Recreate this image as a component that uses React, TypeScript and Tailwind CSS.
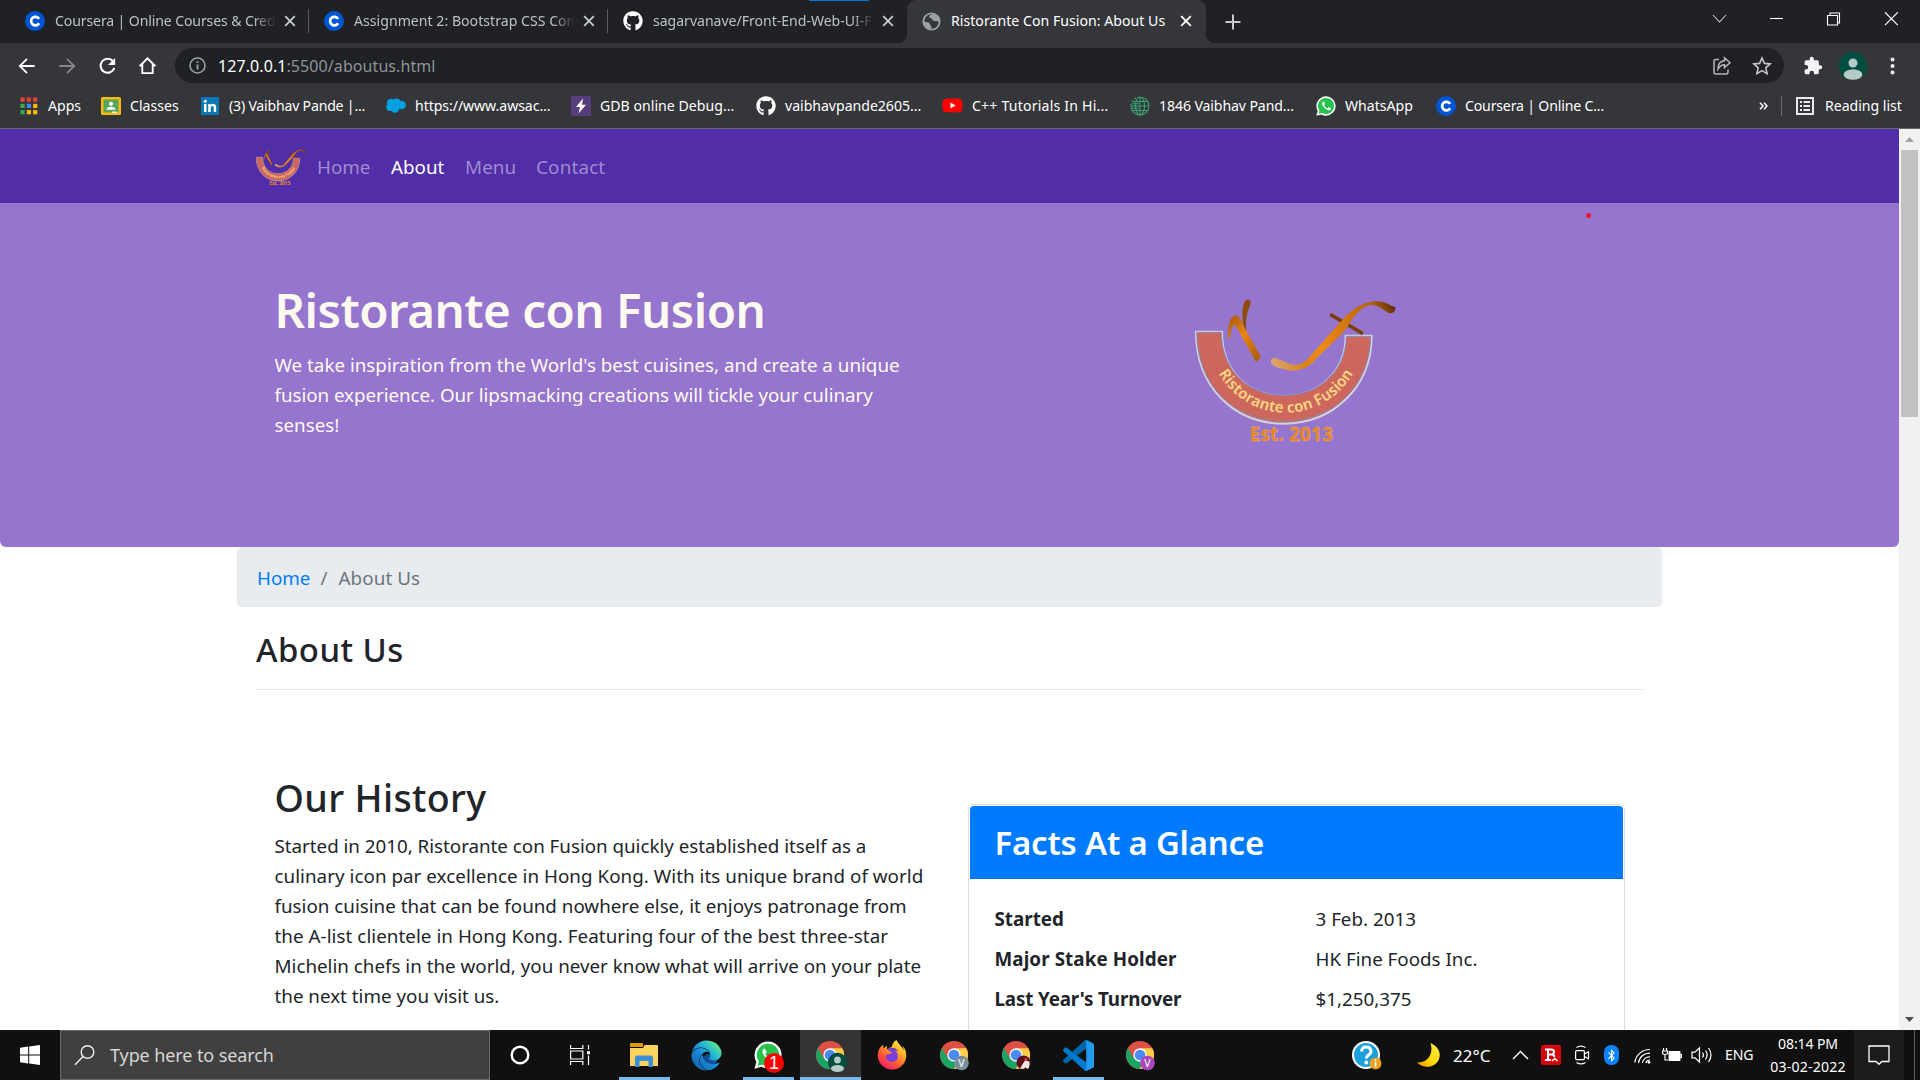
import type { ReactNode } from 'react';
import { FaGithub, FaYoutube, FaEdge, FaFirefoxBrowser, FaBluetoothB } from 'react-icons/fa';

const CourseraIcon = ({ size = 20 }: { size?: number }) => (
  <svg width={size} height={size} viewBox="0 0 20 20">
    <circle cx="10" cy="10" r="10" fill="#0056d2" />
    <path d="M14.1 7.9A4.3 4.3 0 1 0 14.1 12.3" fill="none" stroke="#fff" strokeWidth="2.7" />
  </svg>
);

const GlobeIcon = () => (
  <svg width="19" height="19" viewBox="0 0 20 20">
    <circle cx="10" cy="10" r="9.5" fill="#9aa0a6" />
    <path d="M11 2.200c-1 1.200-3.600 1-3.600 2.800 0 1.600 3.200 1.200 3.400 3 .1 1 1.600 1.600 3 1.400 1.700-.2 3.700.4 3.700 1.100-.2 3.900-3.400 7.200-7.600 7.300v-3c-1.700-.4-1.100-3-3.200-3.700-1.500-.5-3.300-.6-4.200-1.300C2.700 5.600 6.200 2 11 2.200z" fill="#35363a" />
  </svg>
);

const CloseIcon = ({ bright }: { bright?: boolean }) => (
  <svg width="12" height="12" viewBox="0 0 12 12">
    <path d="M1.200 1.200l9.600 9.600M10.800 1.200l-9.600 9.600" stroke={bright ? '#ffffff' : '#c4c7cb'} strokeWidth="1.900" />
  </svg>
);

const AppsIcon = () => (
  <svg width="18" height="18" viewBox="0 0 18 18">
    {['#ea4335', '#ea4335', '#ea4335', '#34a853', '#4285f4', '#fbbc04', '#34a853', '#fbbc04', '#fbbc04'].map((c, i) => (
      <rect key={i} x={(i % 3) * 6.3 + 0.5} y={Math.floor(i / 3) * 6.3 + 0.5} width="4.200" height="4.200" fill={c} />
    ))}
  </svg>
);

const ClassesIcon = () => (
  <svg width="20" height="18" viewBox="0 0 20 18">
    <rect width="20" height="18" rx="1.500" fill="#f9bb0d" />
    <rect x="2.500" y="2.500" width="15" height="13" fill="#57a55a" />
    <circle cx="10" cy="6.800" r="2.100" fill="#fff" />
    <path d="M5.500 12.800q0-3 4.500-3t4.500 3z" fill="#fff" />
    <rect x="11" y="14.500" width="5" height="1.500" fill="#eee" />
  </svg>
);

const LinkedInIcon = () => (
  <svg width="18" height="18" viewBox="0 0 18 18">
    <rect width="18" height="18" fill="#0a76b4" />
    <path d="M3 7h2.500v8H3zM7.200 7h2.400v1.200Q10.400 6.800 12 6.800q3.200 0 3.200 3.700V15h-2.500v-4q0-2-1.400-2T9.700 11v4H7.200z" fill="#fff" />
    <circle cx="4.250" cy="4.300" r="1.500" fill="#fff" />
  </svg>
);

const CloudIcon = () => (
  <svg width="20" height="15" viewBox="0 0 20 15">
    <g fill="#00a1e0">
      <circle cx="5" cy="5" r="4.200" /><circle cx="10.500" cy="4.500" r="4" /><circle cx="15.600" cy="7" r="4.300" />
      <circle cx="4.200" cy="9" r="3.900" /><circle cx="9" cy="10.500" r="4.200" />
    </g>
  </svg>
);

const BoltIcon = () => (
  <svg width="20" height="20" viewBox="0 0 20 20">
    <rect width="20" height="20" fill="#563d7c" />
    <path d="M12 2.500L5 11h4l-1.500 6.500L15 8.700h-4z" fill="#fff" />
  </svg>
);

const GreenGlobe = () => (
  <svg width="20" height="20" viewBox="0 0 20 20" fill="none" stroke="#3aa173" strokeWidth="1.100">
    <circle cx="10" cy="10" r="9" strokeDasharray="30 2 2 2 2 2 2 2" />
    <ellipse cx="10" cy="10" rx="4.500" ry="9" />
    <path d="M10 1v18M1 10h18M2.500 5.500h15M2.500 14.500h15M2 7.700h7M2 12.300h7" />
  </svg>
);

const WhatsAppIcon = ({ size = 20 }: { size?: number }) => (
  <svg width={size} height={size} viewBox="0 0 32 32">
    <path d="M16 0.500a15.500 15.500 0 0 1 0 31q-4 0-7.400-2L0.500 31.600l2.200-7.800A15.500 15.500 0 0 1 16 0.500z" fill="#fff" />
    <path d="M16 3a12.900 12.900 0 1 1-6.800 23.900l-5 1.300 1.300-4.900A12.900 12.900 0 0 1 16 3z" fill="#27c24c" />
    <path d="M11.500 8.600c-2.800 1.700-2.300 5.400.8 9 3.300 4 7.400 6.200 10.300 4.700 1.300-.7 1.700-2.200 1.400-2.700l-3.700-2-2 2.200c-2.700-1-4.600-3-5.400-5l1.500-1.900-1.500-3.900z" fill="#fff" />
  </svg>
);

const tabs: { title: string; icon: ReactNode; track: string }[] = [
  { title: 'Coursera | Online Courses & Cred', icon: <CourseraIcon />, track: 'tracking-[-0.13px]' },
  { title: 'Assignment 2: Bootstrap CSS Com', icon: <CourseraIcon />, track: 'tracking-[0.02px]' },
  { title: 'sagarvanave/Front-End-Web-UI-F', icon: <FaGithub size={20} color="#fff" />, track: 'tracking-[-0.03px]' },
];

function TabStrip() {
  return (
    <div className="relative flex h-[43px] bg-[#202124] pl-[10px] text-[14.1px]">
      <div className="absolute left-[809px] top-0 h-px w-[60px] bg-[#0078d7]" />
      {tabs.map((t, i) => (
        <div key={t.title} className="flex w-[299px] shrink-0 items-center pb-[1px] pl-[15px]">
          {t.icon}
          <div className={`ml-[10px] w-[221px] whitespace-nowrap pb-[1px] text-[#bdc1c6] [mask-image:linear-gradient(90deg,#000_90%,transparent_100%)] ${t.track}`}>{t.title}</div>
          <div className="ml-[8px]"><CloseIcon /></div>
          {i < 2 && <div className="ml-auto h-[24px] w-px bg-[#5b5d61]" />}
        </div>
      ))}
      <div className="relative flex w-[299px] shrink-0 items-center rounded-t-[9px] bg-[#35363a] pb-[1px] pl-[15px]">
        <div className="absolute -left-[9px] bottom-0 h-[9px] w-[9px] bg-[radial-gradient(circle_at_0_0,#202124_9px,#35363a_9.5px)]" />
        <div className="absolute -right-[9px] bottom-0 h-[9px] w-[9px] bg-[radial-gradient(circle_at_100%_0,#202124_9px,#35363a_9.5px)]" />
        <GlobeIcon />
        <div className="ml-[10px] w-[221px] whitespace-nowrap pb-[1px] tracking-[0.03px] text-white">Ristorante Con Fusion: About Us</div>
        <div className="ml-[8px]"><CloseIcon bright /></div>
      </div>
      <div className="ml-[19px] flex items-center">
        <svg width="16" height="16" viewBox="0 0 16 16"><path d="M8 .5v15M.5 8h15" stroke="#c8cacd" strokeWidth="2" /></svg>
      </div>
      <div className="ml-auto flex h-[37px] items-center">
        <svg width="57" height="14" viewBox="0 0 57 14" fill="none" stroke="#d0d0d0" strokeWidth="1.100"><path d="M21 3l6.500 7L34 3" /></svg>
        <svg width="57" height="14" viewBox="0 0 57 14"><path d="M21 6.500h13" stroke="#fff" strokeWidth="1.100" /></svg>
        <svg width="57" height="14" viewBox="0 0 57 14" fill="none" stroke="#fff" strokeWidth="1.100"><path d="M21.500 3.500h10v9.500h-10zM24 3.500v-2.500h9.500v10h-2" /></svg>
        <svg width="57" height="14" viewBox="0 0 57 14"><path d="M22 .3l12.800 12.800M34.800.3L22 13.100" stroke="#fff" strokeWidth="1.200" /></svg>
      </div>
    </div>
  );
}

function Toolbar() {
  return (
    <div className="flex h-[45px] items-center bg-[#35363a]">
      <div className="flex w-[175px] items-center pl-[18px]">
        <svg width="18" height="20" viewBox="0 0 20 20" fill="none" stroke="#fff" strokeWidth="2"><path d="M18.500 10H3M10 2L2 10l8 8" /></svg>
        <svg className="ml-[22px]" width="18" height="20" viewBox="0 0 20 20" fill="none" stroke="#84868a" strokeWidth="2"><path d="M1.500 10h15M10 2l8 8-8 8" /></svg>
        <svg className="ml-[22px]" width="19" height="20" viewBox="0 0 20 20"><path d="M16 5.200A7.400 7.400 0 1 0 17.200 12" fill="none" stroke="#fff" strokeWidth="2.100" /><path d="M18 1.500v7.500h-7.500z" fill="#fff" /></svg>
        <svg className="ml-[21px]" width="19" height="20" viewBox="0 0 20 20" fill="none" stroke="#fff" strokeWidth="2"><path d="M1.700 10.300L10 2l8.300 8.300M4.500 8v9.500h11V8" /></svg>
      </div>
      <div className="flex h-[35px] w-[1609px] items-center rounded-full bg-[#202124] pl-[14px]">
        <svg width="17" height="17" viewBox="0 0 17 17" fill="none" stroke="#9aa0a6" strokeWidth="1.600"><circle cx="8.500" cy="8.500" r="7.500" /><path d="M8.500 7.600v5M8.500 4.200v1.900" strokeWidth="1.900" /></svg>
        <div className="ml-[12px] whitespace-nowrap text-[16px] tracking-[0.08px] text-[#8f9398]"><span className="text-white">127.0.0.1</span>:5500/aboutus.html</div>
        <svg className="ml-auto" width="20" height="20" viewBox="0 0 20 20" fill="none" stroke="#b4b6b9" strokeWidth="1.500"><path d="M7 3.500H4Q2 3.500 2 5.500v10.500q0 2 2 2h10q2 0 2-2v-2.500" /><path d="M12.500 1.800l5.500 4.900-5.500 4.900V8.800C9 8.800 7.500 10.500 6 13c0-4.500 2.300-8 6.500-8.300z" /></svg>
        <svg className="ml-[20px] mr-[12px]" width="20" height="20" viewBox="0 0 20 20" fill="none" stroke="#c4c6c9" strokeWidth="1.600"><path d="M10 2l2.400 5.400 5.800.5-4.400 3.900 1.300 5.800-5.100-3-5.100 3 1.300-5.800L1.800 7.900l5.800-.5z" /></svg>
      </div>
      <svg className="ml-[19px]" width="20" height="20" viewBox="0 0 24 24"><path d="M20.500 11H19V7a2 2 0 0 0-2-2h-4V3.500a2.500 2.500 0 0 0-5 0V5H4a2 2 0 0 0-2 2v3.800h1.500a2.700 2.700 0 0 1 0 5.400H2V20a2 2 0 0 0 2 2h3.800v-1.500a2.700 2.700 0 0 1 5.400 0V22H17a2 2 0 0 0 2-2v-4h1.500a2.500 2.500 0 0 0 0-5z" fill="#f1f3f4" /></svg>
      <svg className="ml-[16px]" width="28" height="28" viewBox="0 0 28 28"><circle cx="14" cy="14" r="14" fill="#014d40" /><circle cx="14" cy="11" r="4.500" fill="#b6cbc7" /><ellipse cx="14" cy="22.500" rx="9.300" ry="5.300" fill="#b6cbc7" /></svg>
      <svg className="ml-[23px]" width="5" height="18" viewBox="0 0 5 18" fill="#f1f3f4"><circle cx="2.500" cy="2.500" r="2" /><circle cx="2.500" cy="9" r="2" /><circle cx="2.500" cy="15.500" r="2" /></svg>
    </div>
  );
}

const bookmarks: { label: string; icon: ReactNode; cls: string; track: string }[] = [
  { label: 'Apps', icon: <AppsIcon />, cls: 'w-[82px]', track: '' },
  { label: 'Classes', icon: <ClassesIcon />, cls: 'w-[99px]', track: '' },
  { label: '(3) Vaibhav Pande |...', icon: <LinkedInIcon />, cls: 'w-[186px]', track: 'tracking-[-0.2px]' },
  { label: 'https://www.awsac...', icon: <CloudIcon />, cls: 'w-[185px]', track: 'tracking-[-0.06px]' },
  { label: 'GDB online Debug...', icon: <BoltIcon />, cls: 'w-[185px]', track: 'tracking-[0.03px]' },
  { label: 'vaibhavpande2605...', icon: <FaGithub size={20} color="#fff" />, cls: 'w-[187px]', track: 'tracking-[-0.02px]' },
  { label: 'C++ Tutorials In Hi...', icon: <span className="flex h-[14px] w-[20px] items-center justify-center"><FaYoutube size={21} color="#ff0000" className="h-[21px] shrink-0 bg-[linear-gradient(#fff,#fff)] bg-[length:8px_8px] bg-center bg-no-repeat" /></span>, cls: 'w-[187px]', track: 'tracking-[0.2px]' },
  { label: '1846 Vaibhav Pand...', icon: <GreenGlobe />, cls: 'w-[186px]', track: 'tracking-[-0.1px]' },
  { label: 'WhatsApp', icon: <WhatsAppIcon />, cls: 'w-[120px]', track: '' },
  { label: 'Coursera | Online C...', icon: <CourseraIcon />, cls: 'w-[186px]', track: 'tracking-[-0.17px]' },
];

function BookmarksBar() {
  return (
    <div className="flex h-[41px] items-center border-b border-[#67686b] bg-[#35363a] pb-[4px] pl-[18px] text-[14.1px] text-white">
      {bookmarks.map((b) => (
        <div key={b.label} className={`flex shrink-0 items-center whitespace-nowrap ${b.cls}`}>
          <div className="flex w-[21px] shrink-0 items-center justify-center">{b.icon}</div>
          <span className={`ml-[9px] ${b.track}`}>{b.label}</span>
        </div>
      ))}
      <svg className="ml-auto" width="9" height="8" viewBox="0 0 9 8" fill="none" stroke="#fff" strokeWidth="1.500"><path d="M1 .8L4 4 1 7.200M5 .8L8 4 5 7.200" /></svg>
      <div className="ml-[13px] h-[20px] w-px bg-[#6b6d70]" />
      <svg className="ml-[14px]" width="18" height="18" viewBox="0 0 18 18" fill="none" stroke="#e8eaed" strokeWidth="2"><path d="M1 1h16v16H1zM4 5h2M4 9h2M4 13h2M7.500 5h6.500M7.500 9h6.500M7.500 13h6.500" /></svg>
      <span className="ml-[11px] mr-[17px] w-[78px] whitespace-nowrap tracking-[-0.02px]">Reading list</span>
    </div>
  );
}

function Logo({ className, viewBox, id }: { className: string; viewBox: string; id: string }) {
  return (
    <svg className={className} viewBox={viewBox} preserveAspectRatio="none">
      <defs>
        <linearGradient id={`${id}-f`} gradientUnits="userSpaceOnUse" x1="335" y1="290" x2="705" y2="110">
          <stop offset="0" stopColor="#dba777" /><stop offset=".22" stopColor="#d8821c" /><stop offset=".4" stopColor="#ec8a12" /><stop offset=".7" stopColor="#c97110" /><stop offset=".85" stopColor="#b5640c" /><stop offset="1" stopColor="#5e2c02" />
        </linearGradient>
        <linearGradient id={`${id}-r`} x1="0" y1="0" x2=".7" y2="1">
          <stop offset="0" stopColor="#a3560a" /><stop offset=".5" stopColor="#e88612" /><stop offset="1" stopColor="#b3600c" />
        </linearGradient>
        <path id={`${id}-arc`} d="M144 192A227 230 0 0 0 611 192" />
      </defs>
      <path d="M108 185H186C186 308 268 378 371 378S557 308 557 197H635C635 350 520 461 371 461S108 350 108 185z" fill="#cd665d" stroke="#d6d2dc" strokeWidth="6" />
      <path d="M110 187H184C186 306 268 376 371 376S557 308 559 199H632C630 350 520 454 371 454S112 350 110 187z" fill="#cd665d" stroke="#6f94cd" strokeWidth="2.500" />
      <text fontFamily="Open Sans, sans-serif" fontWeight="700" fontSize="47">
        <textPath href={`#${id}-arc`} startOffset="50%" textAnchor="middle" textLength="492" lengthAdjust="spacingAndGlyphs" fill="#ffd98a" stroke="#c9693a" strokeWidth="0.800">Ristorante con Fusion</textPath>
      </text>
      <path d="M203 203C203 165 212 138 226 136C240 136 245 158 257 179L303 261L288 277C270 240 238 190 226 165C212 168 213 190 210 203z" fill={`url(#${id}-r)`} />
      <path d="M250 165C244 125 249 92 260 90C268 88 274 92 272 101C262 125 256 145 259 182z" fill="#8f4b0a" />
      <path d="M513 128L611 186L606 196L508 138z" fill="#7d3e06" />
      <path d="M333 272C334 262 346 261 357 268C385 283 412 294 439 271L545 152C580 112 615 94 650 94C678 94 690 108 706 112C706 126 698 132 686 129C668 119 655 104 634 105C600 108 580 145 555 181C520 218 489 245 460 276C432 303 398 308 362 295C342 289 333 284 333 272z" fill={`url(#${id}-f)`} />
      <text x="269" y="514" fontFamily="Open Sans, sans-serif" fontWeight="700" fontSize="57" textLength="250" lengthAdjust="spacing" fill="#e5841a" stroke="#f5b878" strokeWidth="1">Est. 2013</text>
    </svg>
  );
}

const facts = [
  ['Started', '3 Feb. 2013', ''],
  ['Major Stake Holder', 'HK Fine Foods Inc.', 'tracking-[0.1px]'],
  ["Last Year's Turnover", '$1,250,375', 'tracking-[-0.15px]'],
];

const history = [
  ['Started in 2010, Ristorante con Fusion quickly established itself as a', 'tracking-[-0.02px]'],
  ['culinary icon par excellence in Hong Kong. With its unique brand of world', 'tracking-[0.04px]'],
  ['fusion cuisine that can be found nowhere else, it enjoys patronage from', ''],
  ['the A-list clientele in Hong Kong. Featuring four of the best three-star', 'tracking-[0.05px]'],
  ['Michelin chefs in the world, you never know what will arrive on your plate', ''],
  ['the next time you visit us.', ''],
];

function Page() {
  return (
    <div className="h-[901px] w-[1899px] overflow-hidden bg-white text-[18.8px] leading-[30px] text-[#212529]">
      <nav className="flex h-[74px] items-center bg-[#512da8] pl-[256px] pt-[2px] text-[#a08cd0]">
        <Logo id="small" className="h-[37px] w-[50px]" viewBox="105 88 605 432" />
        <span className="ml-[11px] w-[74px]">Home</span>
        <span className="w-[74px] text-white">About</span>
        <span className="w-[71px] tracking-[0.1px]">Menu</span>
        <span className="tracking-[0.2px]">Contact</span>
      </nav>
      <header className="relative flex h-[344px] rounded-b-[6px] bg-[#9575cd] pl-[274.5px] text-[#fffaf0]">
        <div className="w-[885.5px] pt-[77px]">
          <h1 className="text-[47.5px] font-semibold leading-[60px] tracking-[-0.5px]">Ristorante con Fusion</h1>
          <p className="mt-[10px]">We take inspiration from the World's best cuisines, and create a unique<br /><span className="tracking-[-0.05px]">fusion experience. Our lipsmacking creations will tickle your culinary</span><br />senses!</p>
        </div>
        <Logo id="big" className="mt-[67px] h-[200px] w-[270px]" viewBox="0 0 810 600" />
        <div className="absolute left-[1586px] top-[10px] h-[5px] w-[5px] rounded-full bg-[#e5173f]" />
      </header>
      <div className="ml-[237px] flex h-[60px] w-[1425px] items-center rounded-[5px] bg-[#e9ecef] pl-[20px] pt-[2px] text-[#6c757d]">
        <span className="w-[63.5px] text-[#007bff]">Home</span>
        <span className="w-[18px]">/</span>
        <span className="tracking-[0.1px]">About Us</span>
      </div>
      <div className="mx-[256px] mt-[22px] w-[1387px] border-b border-[#e5e5e5] pb-[18px]">
        <h2 className="text-[32.900px] font-medium leading-[42px] tracking-[0.45px]">About Us</h2>
      </div>
      <div className="flex pl-[274.5px] pt-[84px]">
        <div className="w-[693.5px]">
          <h2 className="text-[37.600px] font-medium leading-[48px] tracking-[0.33px]">Our History</h2>
          <p className="mt-[9px] whitespace-nowrap">{history.map(([l, track]) => <span key={l} className={`block ${track}`}>{l}</span>)}</p>
        </div>
        <div className="mt-[30px] h-[300px] w-[657px] rounded-t-[5px] border border-[#dfdfdf] px-px pt-px">
          <h3 className="h-[73px] rounded-t-[4px] border-b border-[#006fe6] bg-[#007bff] pl-[24.5px] pt-[16px] text-[32.900px] font-semibold leading-[42px] tracking-[-0.18px] text-white">Facts At a Glance</h3>
          <dl className="pl-[24.5px] pt-[25px]">
            {facts.map(([k, v, track]) => (
              <div key={k} className="mb-[10px] flex">
                <dt className={`w-[321px] font-bold ${track}`}>{k}</dt>
                <dd>{v}</dd>
              </div>
            ))}
          </dl>
        </div>
      </div>
    </div>
  );
}

function Scrollbar() {
  return (
    <div className="flex h-[901px] w-[21px] flex-col items-center bg-[#f1f1f1]">
      <svg width="21" height="21" viewBox="0 0 21 21"><path d="M6 13h9l-4.500-5z" fill="#a3a3a3" /></svg>
      <div className="h-[267px] w-[17px] bg-[#c1c1c1]" />
      <svg className="mt-auto" width="21" height="21" viewBox="0 0 21 21"><path d="M6 8h9l-4.500 5z" fill="#505050" /></svg>
    </div>
  );
}

const Chrome = ({ badge }: { badge: ReactNode }) => (
  <svg className="overflow-visible" width="28" height="28" viewBox="0 0 28 28">
    <circle cx="14" cy="14" r="14" fill="#dd5144" />
    <path d="M14 7.300H26.300A14 14 0 0 1 13.500 28L20 17z" fill="#ffcd46" />
    <path d="M1.900 7A14 14 0 0 0 13.500 28L19.800 17.300 14 14 8 17.200z" fill="#1da462" />
    <circle cx="14" cy="14" r="6.700" fill="#f4f6f8" />
    <circle cx="14" cy="14" r="5.300" fill="#4c8bf5" />
    {badge}
  </svg>
);

const VBadge = ({ color }: { color: string }) => (
  <g>
    <circle cx="21.500" cy="22" r="7.300" fill={color} />
    <text x="21.500" y="26" textAnchor="middle" fontSize="10.500" fill="#fff" fontFamily="Noto Sans, sans-serif">V</text>
  </g>
);

const Explorer = () => (
  <svg width="28" height="24" viewBox="0 0 28 24">
    <path d="M0 1q0-1 1-1h11q1 0 1 1v3H0z" fill="#dd9a05" />
    <path d="M0 5h13l1.500-3H27q1 0 1 1v20H0z" fill="#ffd25c" />
    <path d="M5 24V15q0-2.500 2.500-2.500h13Q23 12.500 23 15v9h-4.500v-6h-9v6z" fill="#3c8fd6" />
  </svg>
);

const EdgeIcon = () => (
  <span className="relative">
    <svg width="0" height="0" className="absolute">
      <defs><linearGradient id="edge" x1="0" y1="1" x2=".9" y2="0.1"><stop offset="0" stopColor="#0c59a4" /><stop offset=".5" stopColor="#1b8ad8" /><stop offset=".75" stopColor="#2bc3d2" /><stop offset="1" stopColor="#66eb6e" /></linearGradient></defs>
    </svg>
    <span className="absolute left-[11px] top-[14px] h-[13px] w-[15px] rounded-full bg-[#0f4f93]" />
    <FaEdge size={31} className="relative" style={{ fill: 'url(#edge)' }} />
  </span>
);

const FirefoxIcon = () => (
  <span className="relative">
    <svg width="0" height="0" className="absolute">
      <defs><linearGradient id="fox" x1=".85" y1="0" x2=".2" y2="1"><stop offset="0" stopColor="#fff44f" /><stop offset=".35" stopColor="#ffae29" /><stop offset=".65" stopColor="#ff5a36" /><stop offset="1" stopColor="#f5156c" /></linearGradient></defs>
    </svg>
    <span className="absolute left-[7px] top-[8px] h-[15px] w-[15px] rounded-full bg-[#7a3fe0]" />
    <FaFirefoxBrowser size={30} className="relative" style={{ fill: 'url(#fox)' }} />
  </span>
);

const VSCode = () => (
  <svg width="31" height="31" viewBox="0 0 100 100">
    <path d="M96.460 10.800L75.860.880C73.470-.270 70.620.210 68.750 2.080L1.300 63.580c-1.820 1.660-1.820 4.510 0 6.170l5.510 5c1.490 1.350 3.720 1.450 5.320.240L93.360 13.370c2.730-2.070 6.640-.120 6.640 3.300v-.240c0-2.400-1.380-4.580-3.540-5.630z" fill="#0065a9" />
    <path d="M96.460 89.200l-20.600 9.920c-2.390 1.150-5.240.670-7.110-1.200L1.300 36.420c-1.820-1.660-1.820-4.510 0-6.170l5.510-5c1.490-1.350 3.720-1.450 5.320-.240l81.230 61.620c2.730 2.070 6.640.120 6.640-3.300v.240c0 2.400-1.380 4.580-3.540 5.630z" fill="#007acc" />
    <path d="M75.860 99.130c-2.390 1.140-5.240.660-7.110-1.210 2.310 2.300 6.250.670 6.250-2.590V4.670c0-3.260-3.940-4.890-6.250-2.590C70.620.210 73.470-.270 75.860.870l20.600 9.910c2.160 1.040 3.540 3.230 3.540 5.630v67.180c0 2.400-1.380 4.590-3.540 5.630z" fill="#1f9cf0" />
  </svg>
);

const apps: { name: string; icon: ReactNode; line?: boolean; active?: boolean }[] = [
  { name: 'Explorer', icon: <Explorer />, line: true },
  { name: 'Edge', icon: <EdgeIcon /> },
  {
    name: 'WhatsApp', line: true,
    icon: (
      <span className="relative">
        <WhatsAppIcon size={28} />
        <span className="absolute left-[10px] top-[12px] flex h-[20px] w-[20px] items-center justify-center rounded-full bg-[#ff0000] font-['Liberation_Sans'] text-[18px] text-white">1</span>
      </span>
    ),
  },
  { name: 'Chrome', line: true, active: true, icon: <Chrome badge={<g><circle cx="21.500" cy="21.500" r="9.700" fill="#014d40" /><circle cx="21.500" cy="19" r="3.400" fill="#b6cbc7" /><ellipse cx="21.500" cy="27.500" rx="6.600" ry="3.500" fill="#b6cbc7" /></g>} /> },
  { name: 'Firefox', icon: <FirefoxIcon /> },
  { name: 'Chrome V', icon: <Chrome badge={<VBadge color="#78909c" />} /> },
  { name: 'Chrome photo', icon: <Chrome badge={<g><circle cx="21.500" cy="21.500" r="7" fill="#5a0f1a" /><path d="M18 27.500l3-5 2-3 4.300 1q1 3-1 7.500l-3-1.500-2 1.500z" fill="#f3e7e2" /><circle cx="24" cy="18.500" r="1.500" fill="#d1434a" /></g>} /> },
  { name: 'VS Code', icon: <VSCode />, line: true },
  { name: 'Chrome purple', icon: <Chrome badge={<VBadge color="#ab47bc" />} /> },
];

function Taskbar() {
  return (
    <div className="flex h-[50px] bg-[#101010] text-white">
      <div className="flex w-[60px] items-center justify-center">
        <svg width="20" height="20" viewBox="0 0 20 20" fill="#fff"><path d="M0 2.700l8.200-1.100v8H0zM9.200 1.500L20 0v9.600H9.200zM0 10.500h8.200v7.900L0 17.300zM9.200 10.500H20V20L9.200 18.500z" /></svg>
      </div>
      <div className="flex w-[430px] items-center border border-[#6a6a6a] bg-[#404040] pl-[13px]">
        <svg width="22" height="22" viewBox="0 0 22 22" fill="none" stroke="#f0f0f0" strokeWidth="1.400"><circle cx="13.500" cy="8" r="6.300" /><path d="M9 12.500L1 20.800" /></svg>
        <span className="ml-[14px] text-[18px] tracking-[-0.1px] text-[#d6d6d6]">Type here to search</span>
      </div>
      <div className="flex w-[60px] items-center justify-center">
        <svg width="20" height="20" viewBox="0 0 20 20"><circle cx="10" cy="10" r="8.300" fill="none" stroke="#fff" strokeWidth="2.400" /></svg>
      </div>
      <div className="flex w-[63px] items-center justify-center pr-[3px]">
        <svg width="20" height="20" viewBox="0 0 20 20" fill="none" stroke="#fff" strokeWidth="1.200"><path d="M.6 0v3.500h12.200V0M.6 20v-3.500h12.200V20M.6 6h12.200v8H.6zM18.500 0v4.500M18.500 10.500V20" /><path d="M17 6.200h3v3h-3z" fill="#fff" stroke="none" /></svg>
      </div>
      {apps.map((a) => (
        <div key={a.name} className="flex w-[62px] justify-center">
          <div className={`relative flex items-center justify-center ${a.active ? 'w-[61px] bg-[#333333]' : 'w-[51px]'}`}>
            {a.icon}
            {a.line && <div className="absolute bottom-0 left-0 h-[3px] w-full bg-[#76b9ed]" />}
          </div>
        </div>
      ))}
      <div className="ml-auto flex items-center">
        <svg width="30" height="30" viewBox="0 0 30 30"><circle cx="14" cy="15" r="13" fill="#1ba0dc" stroke="#fff" strokeWidth="2" /><path d="M9.500 11.500Q10 7 14.200 7T19 11.200Q19 13.500 16.500 14.900 14.600 16 14.600 18.500" fill="none" stroke="#fff" strokeWidth="3" /><circle cx="14.300" cy="22.500" r="1.900" fill="#fff" /><circle cx="23.500" cy="23.500" r="6" fill="#e8a020" /><path d="M23.500 22v5M23.500 19.300v1.600" stroke="#fff" strokeWidth="1.600" /></svg>
        <svg className="ml-[35px]" width="24" height="27" viewBox="0 0 24 25"><defs><linearGradient id="moon" x1="1" y1="0" x2="0" y2="1"><stop offset="0" stopColor="#fff04a" /><stop offset=".6" stopColor="#ffd500" /><stop offset="1" stopColor="#f58a00" /></linearGradient></defs><path d="M13.500 0C20.500 3 24.500 9 22 16 19 24 8 27 0 19.500 10 20 17 12 13.500 0z" fill="url(#moon)" /></svg>
        <span className="ml-[12px] w-[38px] whitespace-nowrap pt-[2px] text-[16.900px] tracking-[0.1px]">22°C</span>
        <svg className="ml-[21px]" width="17" height="10" viewBox="0 0 17 10" fill="none" stroke="#fff" strokeWidth="1.400"><path d="M1 9l7.500-7.500L16 9" /></svg>
        <div className="ml-[12px] flex h-[20px] w-[20px] items-center justify-center rounded-[2px] bg-[#d6000c]">
          <svg width="14" height="14" viewBox="0 0 14 14" fill="none" stroke="#fff" strokeWidth="2"><path d="M1 1.500h6.500a2.400 2.400 0 0 1 0 5H4M4 1.500v10.500M1 12h6M4 6.500H8q2.300.3 2.300 2.500" /><path d="M8 13l2.700-2.500L13.500 13" strokeWidth="1.500" /></svg>
        </div>
        <svg className="ml-[13px]" width="16" height="20" viewBox="0 0 16 20" fill="none" stroke="#fff" strokeWidth="1.200"><rect x="1.600" y="5.600" width="8.800" height="9" rx="1" /><path d="M10.500 9l4-2.300v7l-4-2.300M2.500 2.500Q7 -.3 11.500 2.500M2.500 17.500q4.500 2.800 9 0" /></svg>
        <div className="ml-[14px] flex h-[20px] w-[15px] items-center justify-center rounded-[7px] bg-[#0a82fb]"><FaBluetoothB size={13} /></div>
        <svg className="ml-[15px]" width="17" height="17" viewBox="0 0 17 17" fill="none" stroke="#fff" strokeWidth="1.200"><path d="M.8 15.500A15 15 0 0 1 16 2.500M4.500 16A11 11 0 0 1 16 6.200M8.300 16A7.300 7.300 0 0 1 16 9.800M11.800 16A4 4 0 0 1 16 13" /><circle cx="15" cy="15.300" r="1.400" fill="#fff" stroke="none" /></svg>
        <svg className="ml-[11px]" width="20" height="15" viewBox="0 0 20 15"><path d="M1.500 0v3M4.500 0v3M.5 3h5v2.500q-2.500 2-5 0zM3 6v6h3" fill="none" stroke="#fff" strokeWidth="1.200" /><path d="M7 3.500h11v9H7z" fill="#fff" stroke="#fff" /><path d="M18.500 6h1.500v4h-1.500z" fill="#fff" /></svg>
        <svg className="ml-[9px]" width="22" height="18" viewBox="0 0 22 18" fill="none" stroke="#fff" strokeWidth="1.200"><path d="M1 6.200h3L8.500 2v14L4 11.800H1z" /><path d="M11.500 6.500q1.800 2.500 0 5M14.500 4.500q3.300 4.500 0 9M17.500 2q5 7 0 14" /></svg>
        <span className="ml-[12px] w-[31px] text-[14.100px] tracking-[-0.2px]">ENG</span>
        <div className="ml-[11px] flex w-[82px] flex-col items-center whitespace-nowrap text-[14.100px] leading-[23px]">
          <span className="tracking-[-0.15px]">08:14 PM</span>
          <span className="tracking-[0.2px]">03-02-2022</span>
        </div>
        <div className="ml-[5px] flex h-full w-[50px] items-center justify-center bg-[#1c1c1c]">
          <svg width="22" height="20" viewBox="0 0 22 20" fill="none" stroke="#fff" strokeWidth="1.300"><path d="M1 1h20v15.500h-7L11 19.300 8 16.500H1z" /></svg>
        </div>
        <div className="ml-[10px] mr-[5px] h-full w-px bg-[#5a5a5a]" />
      </div>
    </div>
  );
}

export default function App() {
  return (
    <div className="h-[1080px] w-[1920px] overflow-hidden font-['Noto_Sans','Open_Sans',sans-serif]">
      <TabStrip />
      <Toolbar />
      <BookmarksBar />
      <div className="flex"><Page /><Scrollbar /></div>
      <Taskbar />
    </div>
  );
}
